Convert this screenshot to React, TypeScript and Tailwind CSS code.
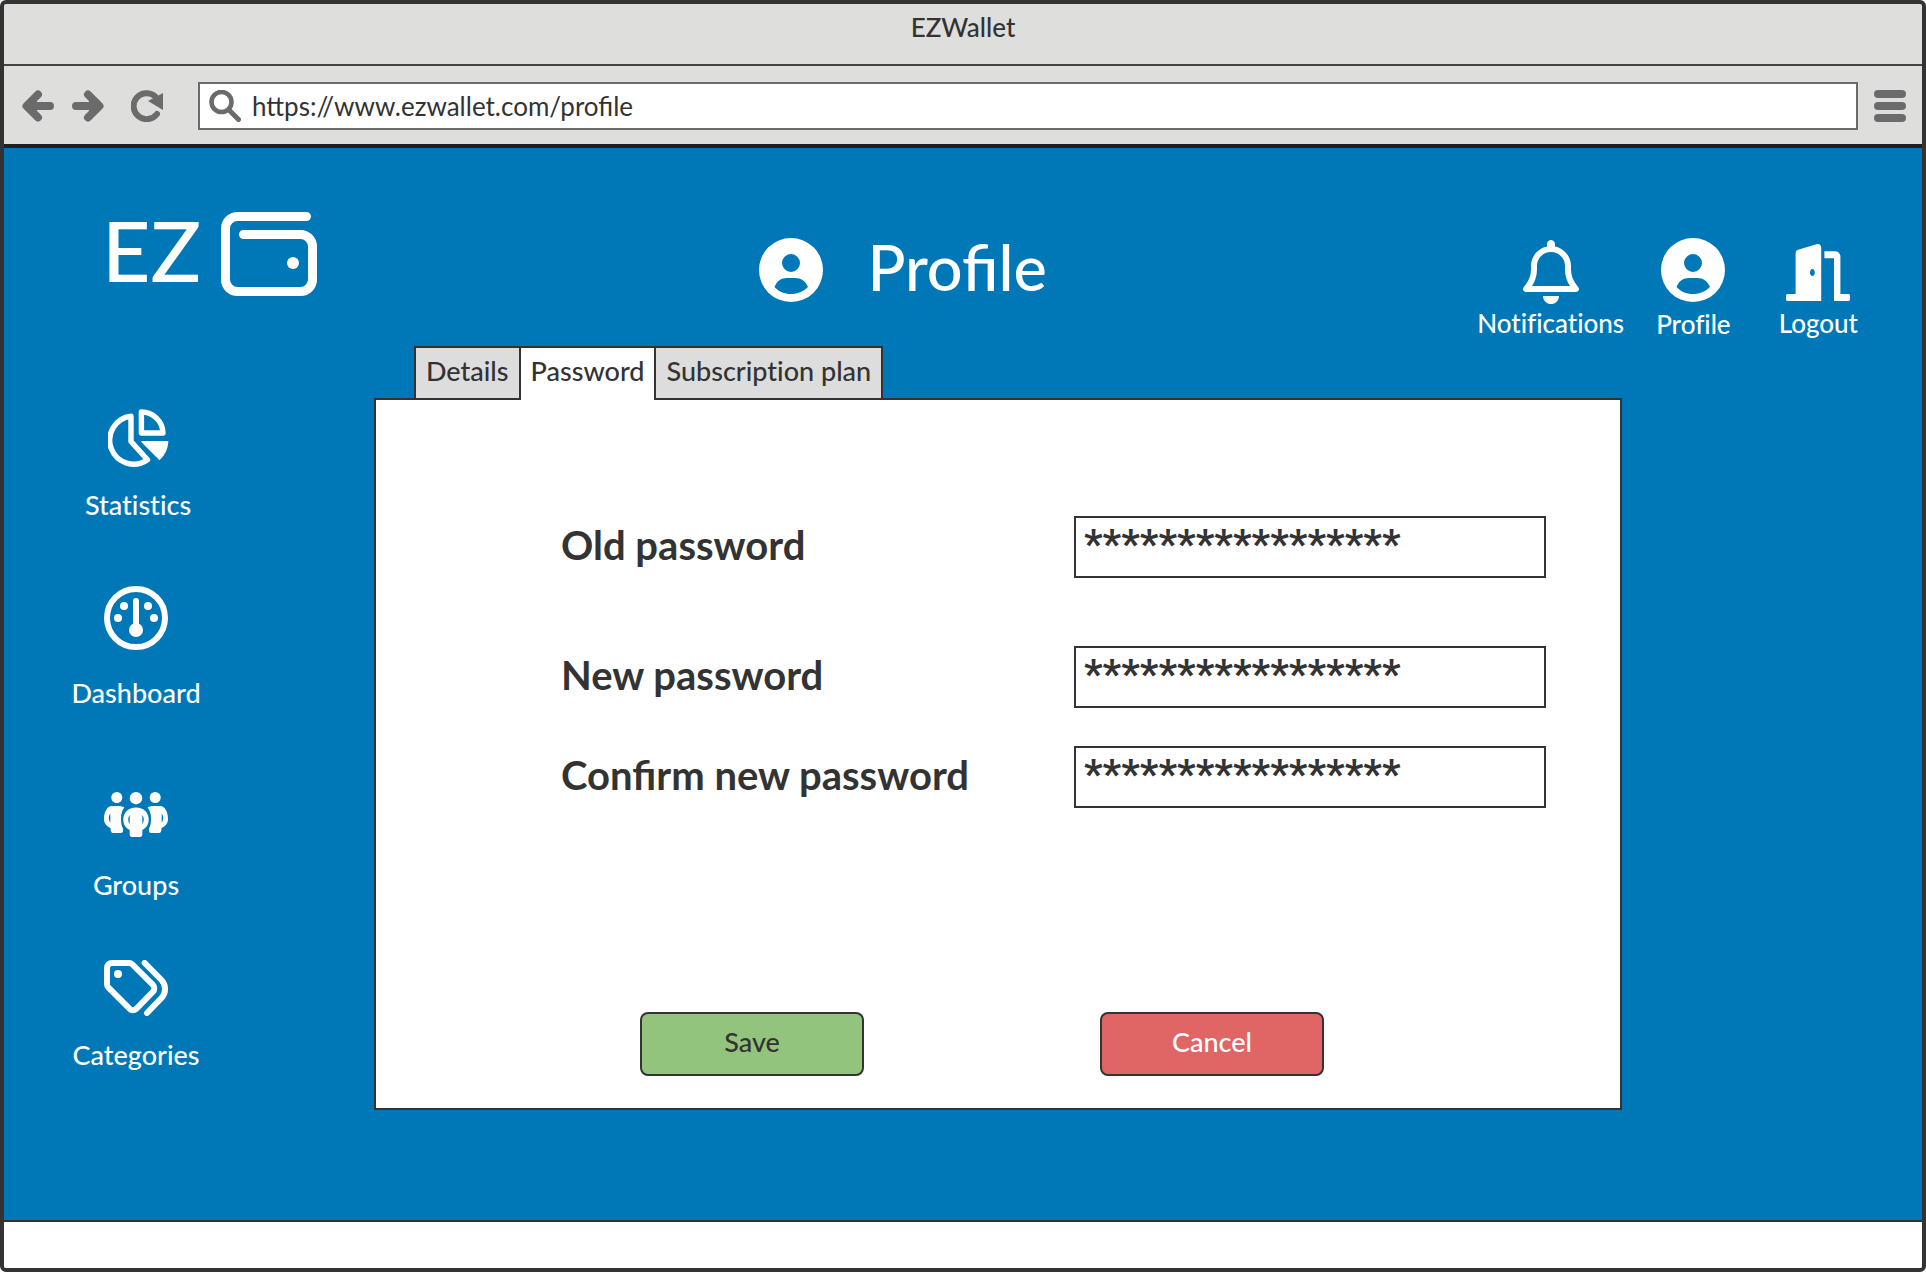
import type { ReactNode } from "react";
import { FaRegBell } from "react-icons/fa6";
import { FaDoorOpen } from "react-icons/fa";

function ArrowIcon({ flip = false }: { flip?: boolean }) {
  return (
    <svg viewBox="0 0 32 32" className={flip ? "size-8 -scale-x-100" : "size-8"} fill="none" stroke="currentColor" strokeWidth="8" strokeLinecap="round" strokeLinejoin="round" aria-hidden="true">
      <path d="M28 16H6M16 4.5L4.5 16L16 27.5" />
      <path d="M9 16L14 11V21Z" strokeWidth="2" fill="currentColor" />
    </svg>
  );
}

function ReloadIcon() {
  return (
    <svg viewBox="0 0 32 32" className="size-8" fill="none" stroke="currentColor" strokeWidth="6" strokeLinecap="round" aria-hidden="true">
      <path d="M24 6.2A13 13 0 1 0 26 24" />
      <path d="M17 11L32 3V20Z" fill="currentColor" stroke="none" />
    </svg>
  );
}

function SearchIcon() {
  return (
    <svg viewBox="0 0 32 32" className="size-8 shrink-0 text-[#6b6b6b]" fill="none" stroke="currentColor" strokeLinecap="round" aria-hidden="true">
      <circle cx="12.5" cy="12" r="10" strokeWidth="4.6" />
      <path d="M20.500 20.500L29.500 29.500" strokeWidth="5" />
    </svg>
  );
}

function MenuIcon() {
  return (
    <svg viewBox="0 0 32 32" className="size-8" fill="currentColor" aria-hidden="true">
      <rect width="32" height="8" rx="4" />
      <rect y="12" width="32" height="8" rx="4" />
      <rect y="24" width="32" height="8" rx="4" />
    </svg>
  );
}

function WalletIcon() {
  return (
    <svg viewBox="0 0 96 84" className="h-[84px] w-24" fill="none" stroke="currentColor" strokeWidth="9" strokeLinecap="round" aria-hidden="true">
      <path d="M85.5 4.5H16.5A12 12 0 0 0 4.5 16.5V67.5A12 12 0 0 0 16.5 79.5H79.5A12 12 0 0 0 91.5 67.5V34.5A12 12 0 0 0 79.5 22.5H22.5" />
      <circle cx="72" cy="51" r="6" fill="currentColor" stroke="none" />
    </svg>
  );
}

function UserIcon() {
  return (
    <svg viewBox="0 0 64 64" className="size-16" fill="currentColor" aria-hidden="true">
      <path fillRule="evenodd" d="M32 0A32 32 0 1 1 32 64A32 32 0 1 1 32 0ZM32 16A9 9 0 1 0 32 34A9 9 0 1 0 32 16ZM15.5 49C18 43 22 40 28 40H36C42 40 46.500 43 49 49C44.500 53.500 38.500 56 32 56S19.500 53.500 15.500 49Z" />
    </svg>
  );
}

function PieIcon() {
  return (
    <svg viewBox="0 0 61 58" className="h-[58px] w-[61px]" fill="none" stroke="currentColor" strokeWidth="5.4" strokeLinejoin="round" aria-hidden="true">
      <path d="M23 7.300V32.500L39.500 50.800A24 24 0 1 1 23 7.300Z" />
      <path d="M33.400 3V24H55A21.500 21.500 0 0 0 33.400 3Z" />
      <path d="M34 32.800H59.700A27 27 0 0 1 51.500 50.300Z" fill="currentColor" strokeWidth="1.400" />
    </svg>
  );
}

function GaugeIcon() {
  return (
    <svg viewBox="0 0 64 64" className="size-16" fill="currentColor" aria-hidden="true">
      <circle cx="32" cy="32" r="29" fill="none" stroke="currentColor" strokeWidth="6" />
      <path d="M32 15V44" stroke="currentColor" strokeWidth="6" strokeLinecap="round" />
      <circle cx="32" cy="44" r="7" />
      <circle cx="20" cy="20" r="4" />
      <circle cx="44" cy="20" r="4" />
      <circle cx="14" cy="32" r="4" />
      <circle cx="50" cy="32" r="4" />
    </svg>
  );
}

const sidePerson =
  "M8 14H14C17 14 19 14.500 20.300 15.500C17.500 19 17 23 17 27C17 31 17.500 34 19 36.500C19.500 39.500 18.500 41 17 41H9.500C7.500 41 6.500 40 6.500 36C2 34 0 31 0 27C0 20 3 14 8 14ZM6.300 21.500C4.300 24 4.300 28 6.300 31Z";

function GroupIcon() {
  return (
    <svg viewBox="0 0 64 45" className="h-[45px] w-16" fill="currentColor" fillRule="evenodd" aria-hidden="true">
      <circle cx="12.800" cy="5.500" r="5.500" />
      <circle cx="51.200" cy="5.500" r="5.500" />
      <circle cx="32" cy="6.200" r="6.200" />
      <path d={sidePerson} />
      <path d={sidePerson} transform="matrix(-1 0 0 1 64 0)" />
      <path d="M32 15.500C40 15.500 44.700 21 44.700 27.500C44.700 33 42 36 38.300 38V42.500C38.300 44 37.500 45 36 45H28C26.500 45 25.700 44 25.700 42.500V38C22 36 19.300 33 19.300 27.500C19.300 21 24 15.500 32 15.500ZM25.700 23C23.700 25.500 23.700 29.500 25.700 32ZM38.300 23V32C40.300 29.500 40.300 25.500 38.300 23Z" />
    </svg>
  );
}

function TagsIcon() {
  return (
    <svg viewBox="0 0 64 56" className="h-14 w-16" fill="none" stroke="currentColor" strokeWidth="6" strokeLinecap="round" strokeLinejoin="round" aria-hidden="true">
      <path d="M8 3H25C26.500 3 27.500 3.500 28.500 4.500L48.700 24.700C50.800 26.800 50.800 30 48.700 32L32.500 48.700C30.500 50.800 27.500 50.800 25.500 48.700L4.500 27.700C3.500 26.700 3 25.700 3 24.300V8C3 5 5 3 8 3Z" />
      <path d="M40.700 3L57.500 20C62.200 25 62.200 33 57.500 38L43 53" />
      <circle cx="14" cy="14" r="4" fill="currentColor" stroke="none" />
    </svg>
  );
}

function NavItem({ label, className, children }: { label: string; className: string; children: ReactNode }) {
  return (
    <a href="#" className={`flex flex-col items-center ${className}`}>
      <span className="flex h-16 items-center">{children}</span>
      <span>{label}</span>
    </a>
  );
}

function PasswordRow({ id, label }: { id: string; label: string }) {
  return (
    <div className="flex items-center justify-between">
      <label htmlFor={id} className="pb-1 text-[40px] leading-[48px] font-bold">
        {label}
      </label>
      <input
        id={id}
        type="text"
        defaultValue="*****************"
        className="h-[62px] w-[472px] border-2 border-[#333] bg-white px-2 pb-1.5 font-[Roboto,sans-serif] text-[41px] leading-[50px] font-bold outline-none"
      />
    </div>
  );
}

export default function App() {
  return (
    <div className="flex min-h-screen flex-col overflow-hidden rounded-md border-4 border-[#333] bg-white font-[Lato,sans-serif] text-[26px] leading-8 font-medium text-[#333]">
      <div className="-mx-1 -mt-1 rounded-t-md border-4 border-[#231f20] bg-[#dededc]">
        <div className="h-[62px] border-b-2 border-[#444] pt-[7px] text-center">EZWallet</div>
        <div className="flex h-[78px] items-center px-4 pt-0.5 text-[#6b6b6b]">
          <button type="button" aria-label="Back" className="ml-0.5"><ArrowIcon /></button>
          <button type="button" aria-label="Forward" className="ml-[18px]"><ArrowIcon flip /></button>
          <button type="button" aria-label="Reload" className="ml-[27px]"><ReloadIcon /></button>
          <div className="mr-4 ml-[35px] flex h-12 flex-1 items-center border-2 border-[#6b6b6b] bg-white pl-[9px]">
            <SearchIcon />
            <input aria-label="Address" defaultValue="https://www.ezwallet.com/profile" className="ml-[11px] h-9 min-w-0 flex-1 font-normal text-[#333] outline-none" />
          </div>
          <button type="button" aria-label="Menu"><MenuIcon /></button>
        </div>
      </div>

      <main className="flex flex-1 flex-col bg-[#0078b8] pt-16 text-white">
        <header className="flex h-[134px] items-start justify-between pr-16 pl-[98px]">
          <div className="flex items-center gap-5">
            <span className="pb-2 text-[84px] leading-[76px]">EZ</span>
            <WalletIcon />
          </div>
          <div className="flex items-center gap-11 pt-[26px] pl-3">
            <UserIcon />
            <h1 className="pb-1.5 text-[63px] leading-[58px]">Profile</h1>
          </div>
          <div className="flex pt-[26px] [font-variant-ligatures:none]">
            <a href="#" className="flex flex-col items-center gap-[3px]">
              <span className="pt-0.5"><FaRegBell className="h-16 w-14" /></span>
              <span>Notifications</span>
            </a>
            <a href="#" className="ml-8 flex flex-col items-center gap-1.5">
              <UserIcon />
              <span>Profile</span>
            </a>
            <a href="#" className="ml-12 flex flex-col items-center gap-[5px]">
              <span className="flex h-16 items-end pb-px"><FaDoorOpen className="h-[57px] w-16" preserveAspectRatio="none" /></span>
              <span>Logout</span>
            </a>
          </div>
        </header>

        <div className="flex flex-1 pr-[300px] text-[27px]">
          <nav className="flex w-[370px] shrink-0 flex-col items-start pt-[60px] [font-variant-ligatures:none]">
            <div className="flex w-[264px] flex-col">
              <NavItem label="Statistics" className="gap-[19px] pl-1"><PieIcon /></NavItem>
              <NavItem label="Dashboard" className="mt-[65px] gap-[27px]"><GaugeIcon /></NavItem>
              <NavItem label="Groups" className="mt-[73px] gap-[23px]"><GroupIcon /></NavItem>
              <NavItem label="Categories" className="mt-[55px] gap-[19px]"><TagsIcon /></NavItem>
            </div>
          </nav>

          <section className="flex min-w-0 flex-1 flex-col text-[#333]">
            <div role="tablist" className="z-10 -mb-0.5 ml-10 flex h-[54px] [font-variant-ligatures:none]">
              <button type="button" role="tab" aria-selected="false" className="border-2 border-[#333] bg-[#ddd] px-2.5 pb-1">Details</button>
              <button type="button" role="tab" aria-selected="true" className="border-t-2 border-[#333] bg-white px-2.5 pb-1.5">Password</button>
              <button type="button" role="tab" aria-selected="false" className="border-2 border-[#333] bg-[#ddd] px-2.5 pb-1">Subscription plan</button>
            </div>
            <form className="flex flex-col border-2 border-[#333] bg-white pt-[116px] pb-8">
              <div className="flex flex-col pr-[74px] pl-[185px]">
                <PasswordRow id="old-password" label="Old password" />
                <div className="h-[68px]" />
                <PasswordRow id="new-password" label="New password" />
                <div className="h-[38px]" />
                <PasswordRow id="confirm-password" label="Confirm new password" />
              </div>
              <div className="mt-[204px] flex justify-center gap-[236px] pr-8">
                <button type="button" className="h-16 w-56 rounded-lg border-2 border-[#333] bg-[#93c47d] pb-1">Save</button>
                <button type="button" className="h-16 w-56 rounded-lg border-2 border-[#333] bg-[#e06666] pb-1 text-white">Cancel</button>
              </div>
            </form>
          </section>
        </div>
      </main>
      <footer className="h-12 border-t-2 border-[#333] bg-white" />
    </div>
  );
}
